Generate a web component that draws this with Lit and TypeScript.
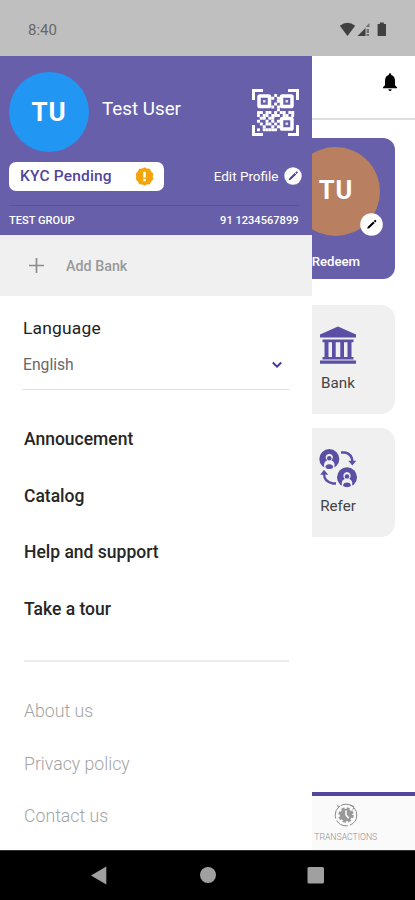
import { LitElement, html, css, svg } from "lit";
import { customElement } from "lit/decorators.js";

// Data modules of the code; the three finder corners are drawn separately.
const QR = [
  "0000001000000",
  "0000010100000",
  "0000000100000",
  "0000001000000",
  "0000010100000",
  "0000000100000",
  "1101101011011",
  "1011011101101",
  "0110110000000",
  "1001010100000",
  "0101101000000",
  "0010010100000",
  "1011111000000",
];

const pencil = svg`<path d="M-4.300 4.300L-3.700 2.300 1.700-3 3.200-1.500-2.300 3.700zM2.300-3.500l1-1q.4-.3.7 0l.7.7q.3.4 0 .7l-1 1z"/>`;

@customElement("app-root")
export class AppRoot extends LitElement {
  static styles = css`
    :host { display: block; width: 415px; height: 900px; overflow: hidden; font-family: Roboto, sans-serif; background: #fff; }
    * { box-sizing: border-box; }
    svg { display: block; flex: none; }
    .status { height: 56px; background: #bfbfbf; display: flex; align-items: center; justify-content: space-between; padding: 4px 28px 0 28px; color: #686868; font-size: 15px; }
    .main { display: flex; height: 794px; }
    .drawer { width: 311.5px; flex: none; background: #fff; }
    .head { height: 179px; background: #685fab; color: #fff; padding: 16px 13px 0 9px; }
    .user { display: flex; height: 80px; align-items: center; }
    .avatar { width: 80px; height: 80px; border-radius: 50%; background: #2196f3; display: flex; align-items: center; justify-content: center; font-weight: 700; font-size: 26px; letter-spacing: .8px; padding-bottom: 1px; }
    .name { flex: 1; font-size: 18.8px; padding: 0 0 7px 13px; }
    .kyc { display: flex; justify-content: space-between; align-items: center; margin-top: 9.5px; height: 29px; }
    .pill { width: 155px; height: 29px; background: #fff; border-radius: 7px; display: flex; align-items: center; justify-content: space-between; padding: 0 10px 0 11px; color: #51459b; font-weight: 500; font-size: 15.5px; letter-spacing: .18px; }
    .edit { display: flex; align-items: center; gap: 5px; font-size: 13.5px; margin-right: -3px; }
    .group { display: flex; justify-content: space-between; align-items: center; margin-top: 14px; height: 31px; border-top: 1px solid #5b5299; font-weight: 500; font-size: 11.1px; }
    .add { height: 61px; background: #f0f0f0; display: flex; align-items: center; padding-left: 28px; gap: 21px; color: #999; font-weight: 500; font-size: 14.3px; }
    .lang { margin: 0 22px 0 22px; height: 94px; border-bottom: 1.5px solid #e2e2e2; padding-top: 22px; }
    .label { padding-left: 1px; font-size: 17.4px; line-height: 21px; color: #222; letter-spacing: .2px; }
    .select { display: flex; align-items: center; justify-content: space-between; margin-top: 15px; height: 21px; font-size: 15.7px; color: #686868; padding: 0 7px 0 1px; }
    .menu { margin: 0 23px 0 24px; padding-top: 21px; height: 272px; border-bottom: 2px solid #ebebeb; color: #262626; font-size: 17.5px; font-weight: 500; }
    .item { height: 56.6px; display: flex; align-items: center; }
    .links { margin-left: 24px; padding-top: 23px; color: #a4a4a4; font-weight: 300; font-size: 17.7px; }
    .link { height: 52.5px; display: flex; align-items: center; }
    .page { flex: 1; min-width: 0; overflow: hidden; display: flex; flex-direction: column; background: #fff; }
    .bar { height: 64px; flex: none; border-bottom: 2px solid #dedede; display: flex; justify-content: flex-end; padding: 16px 16px 0 0; }
    .card { flex: none; margin: 17.5px 0 0 -35.6px; width: 119px; height: 141px; background: #685fab; border-radius: 12px; display: flex; flex-direction: column; align-items: center; color: #fff; padding-top: 9px; }
    .photo { position: relative; width: 89px; height: 89px; border-radius: 50%; background: #b88060; display: flex; align-items: center; justify-content: center; font-size: 25.5px; font-weight: 700; letter-spacing: .8px; padding: 0 0 2px 1px; }
    .badge { position: absolute; right: -3px; bottom: 0; }
    .redeem { font-size: 13.2px; line-height: 16px; margin-top: 18px; font-weight: 500; padding-left: 1px; }
    .tile { flex: none; width: 115px; height: 109px; border-radius: 14px; background: #f0f0f0; margin: 0 0 14px -31.500px; display: flex; flex-direction: column; align-items: center; color: #444; font-size: 15.2px; padding: 20px 0 0 1px; }
    .card + .tile { margin-top: 26.5px; }
    .cap { margin-top: 9px; line-height: 18px; }
    .tabs { margin-top: auto; flex: none; height: 58px; border-top: 4px solid #5547a0; background: #fafafa; display: flex; flex-direction: column; align-items: center; padding: 7px 35px 0 0; color: #909090; font-size: 8.7px; line-height: 12px; font-weight: 300; }
    .tabcap { margin-top: 4px; }
    .nav { height: 50px; background: #000; border-top: 1px solid #333; }
  `;

  render() {
    return html`
      <div class="status">
        <span>8:40</span>
        <svg width="48" height="16" viewBox="339 22 48 16" fill="#404040">
          <path d="M339.8 25.7Q347.5 20 355.2 25.7L347.5 36z" />
          <path d="M357.5 36L365.500 28V36z" />
          <path d="M365 27.5l4.500-4.500v4h-4.500zM366.5 29h2.500v4h-2.500zM366.500 34h2.500v2h-2.500z" opacity=".6" />
          <path d="M377.6 24h2.2v-1.5h4V24h2.2v12h-8.4z" />
        </svg>
      </div>
      <div class="main">
        <div class="drawer">
          <div class="head">
            <div class="user">
              <div class="avatar">TU</div>
              <div class="name">Test User</div>
              <svg width="47" height="47" viewBox="0 0 47 47">
                <path fill="none" stroke="#fff" stroke-width="3" d="M1.5 11V1.5H11M36 1.5h9.5V11M45.5 36v9.5H36M11 45.5H1.5V36" />
                <g transform="translate(5 5)" fill="none" stroke="#fff" stroke-width="3.500">
                  <rect x="2" y="2" width="10.500" height="10.500" rx=".8" />
                  <rect x="24.500" y="2" width="10.500" height="10.500" rx=".8" />
                  <rect x="24.500" y="24.500" width="10.500" height="10.500" rx=".8" />
                </g>
                <g transform="translate(5 5) scale(2.850)" fill="#fff">
                  ${QR.flatMap((row, y) =>
                    [...row].map((c, x) => (c === "1" ? svg`<rect x=${x} y=${y} width="1.05" height="1.05" rx=".15"/>` : null)),
                  )}
                  <rect x="2.100" y="2.100" width=".9" height=".9" opacity=".8" />
                  <rect x="10" y="2.100" width=".9" height=".9" opacity=".8" />
                  <rect x="10" y="10" width=".9" height=".9" opacity=".8" />
                </g>
              </svg>
            </div>
            <div class="kyc">
              <div class="pill">
                <span>KYC Pending</span>
                <svg width="19" height="19" viewBox="-9.5 -9.5 19 19">
                  <path fill="#f5a30a" stroke="#f5a30a" stroke-width="1.5" stroke-linejoin="round" d="M0-8.4L2.2-7.2 4.9-7 6-4.7 8-2.6 7.5 0 8 2.6 6 4.7 4.9 7 2.2 7.2 0 8.4-2.2 7.2-4.9 7-6 4.7-8 2.6-7.5 0-8-2.6-6-4.7-4.9-7-2.2-7.2z" />
                  <path fill="#fff" d="M-1.3-4.8h2.6V1h-2.600zM-1.3 2.3h2.6v2.500h-2.600z" />
                </svg>
              </div>
              <div class="edit">
                <span>Edit Profile</span>
                <svg width="18" height="18" viewBox="-9 -9 18 18"><circle r="8.7" fill="#fff" /><g fill="#4c3d98">${pencil}</g></svg>
              </div>
            </div>
            <div class="group"><span>TEST GROUP</span><span>91 1234567899</span></div>
          </div>
          <div class="add">
            <svg width="17" height="17" viewBox="0 0 17 17" stroke="#8c8c8c" stroke-width="1.7"><path d="M8.5 1v15M1 8.5h15" /></svg>
            <span>Add Bank</span>
          </div>
          <div class="lang">
            <div class="label">Language</div>
            <div class="select">
              <span>English</span>
              <svg width="12" height="8" viewBox="0 0 12 8" fill="none" stroke="#4335a0" stroke-width="1.9"><path d="M1.8 1.5L6 5.7l4.2-4.2" /></svg>
            </div>
          </div>
          <div class="menu">
            ${["Annoucement", "Catalog", "Help and support", "Take a tour"].map((t) => html`<div class="item">${t}</div>`)}
          </div>
          <div class="links">
            ${["About us", "Privacy policy", "Contact us"].map((t) => html`<div class="link">${t}</div>`)}
          </div>
        </div>
        <div class="page">
          <div class="bar">
            <svg width="18" height="20" viewBox="0 0 18 20"><path d="M9 1.2q1.2 0 1.2 1.3v.6Q14 4.2 14 9v4.2l2 2V16.300H2v-1.1l2-2V9Q4 4.200 7.800 3.100V2.500Q7.800 1.200 9 1.200zM7.300 17.200h3.400q0 1.700-1.700 1.700t-1.700-1.700z" /></svg>
          </div>
          <div class="card">
            <div class="photo">TU
              <svg class="badge" width="23" height="23" viewBox="-11.500 -11.500 23 23"><circle r="11.300" fill="#fff" />${pencil}</svg>
            </div>
            <div class="redeem">Redeem</div>
          </div>
          <div class="tile">
            <svg width="38" height="40" viewBox="0 0 38 40" fill="#5a4fa5">
              <path d="M19 1.500L37 9.500v3H1v-3zM3.500 14.500h31v2.700h-31zM3.500 32h31v2.500h-31zM1 35.500h36v3.300H1z" />
              <path d="M5.500 17h4v15h-4zM13 17h3.700v15H13zM21.300 17H25v15h-3.700zM28.500 17h4v15h-4z" />
            </svg>
            <div class="cap">Bank</div>
          </div>
          <div class="tile">
            <svg width="38" height="40" viewBox="0 0 38 40" fill="none" stroke="#5a4fa5" stroke-width="2">
              ${[[10.300, 11], [28, 29.300]].map(
                ([x, y]) => svg`<g transform="translate(${x} ${y})">
                  <circle r="10" fill="#5a4fa5" stroke="none"/>
                  <path d="M-5.200 9V5Q-4.800 2.300-2.300 1.600-4.200-.5-3.500-2.900-2.500-5.100 0-5.200 2.500-5.100 3.500-2.900 4.200-.5 2.300 1.600 4.800 2.300 5.200 5V9" fill="#f0f0f0" stroke="none"/>
                  <path d="M-4 8.200Q-3.600 5.200 0 5.200T4 8.200Q0 11.300-4 8.200z" fill="#5a4fa5" stroke="none"/>
                  <circle cy="-.8" r="2.300" fill="#5a4fa5" stroke="none"/></g>`,
              )}
              <path d="M22 4.500h4Q33.500 6 33.500 14.500M17 35.500h-3Q5 34 5 25.500" stroke-width="2.300" />
              <path d="M29.300 12.800h8l-4 4.700zM1.200 26.700h8L5 21.700z" fill="#5a4fa5" stroke="none" />
            </svg>
            <div class="cap">Refer</div>
          </div>
          <div class="tabs">
            <svg width="24" height="24" viewBox="-12 -12 24 24" fill="none" stroke="#8a8a8a">
              <circle r="10.800" stroke-dasharray="13 2" />
              <circle r="6" fill="#999" stroke="#999" stroke-width="3.500" stroke-dasharray="2.700 2" />
              <circle r="6.200" fill="#999" stroke="none" />
              <path d="M0-4.500V0l2.800 3.300" stroke="#fff" stroke-width="1.500" />
              <path d="M-9-9l3 .5M4-10l4 1.500-1 3" />
            </svg>
            <div class="tabcap">TRANSACTIONS</div>
          </div>
        </div>
      </div>
      <div class="nav">
        <svg width="415" height="49" viewBox="0 851 415 49" fill="#a0a0a0">
          <path d="M91 875.500L106.300 866.500v18z" />
          <circle cx="208" cy="875" r="8" />
          <rect x="307.500" y="867" width="16.500" height="16.500" rx="1.500" />
        </svg>
      </div>
    `;
  }
}
